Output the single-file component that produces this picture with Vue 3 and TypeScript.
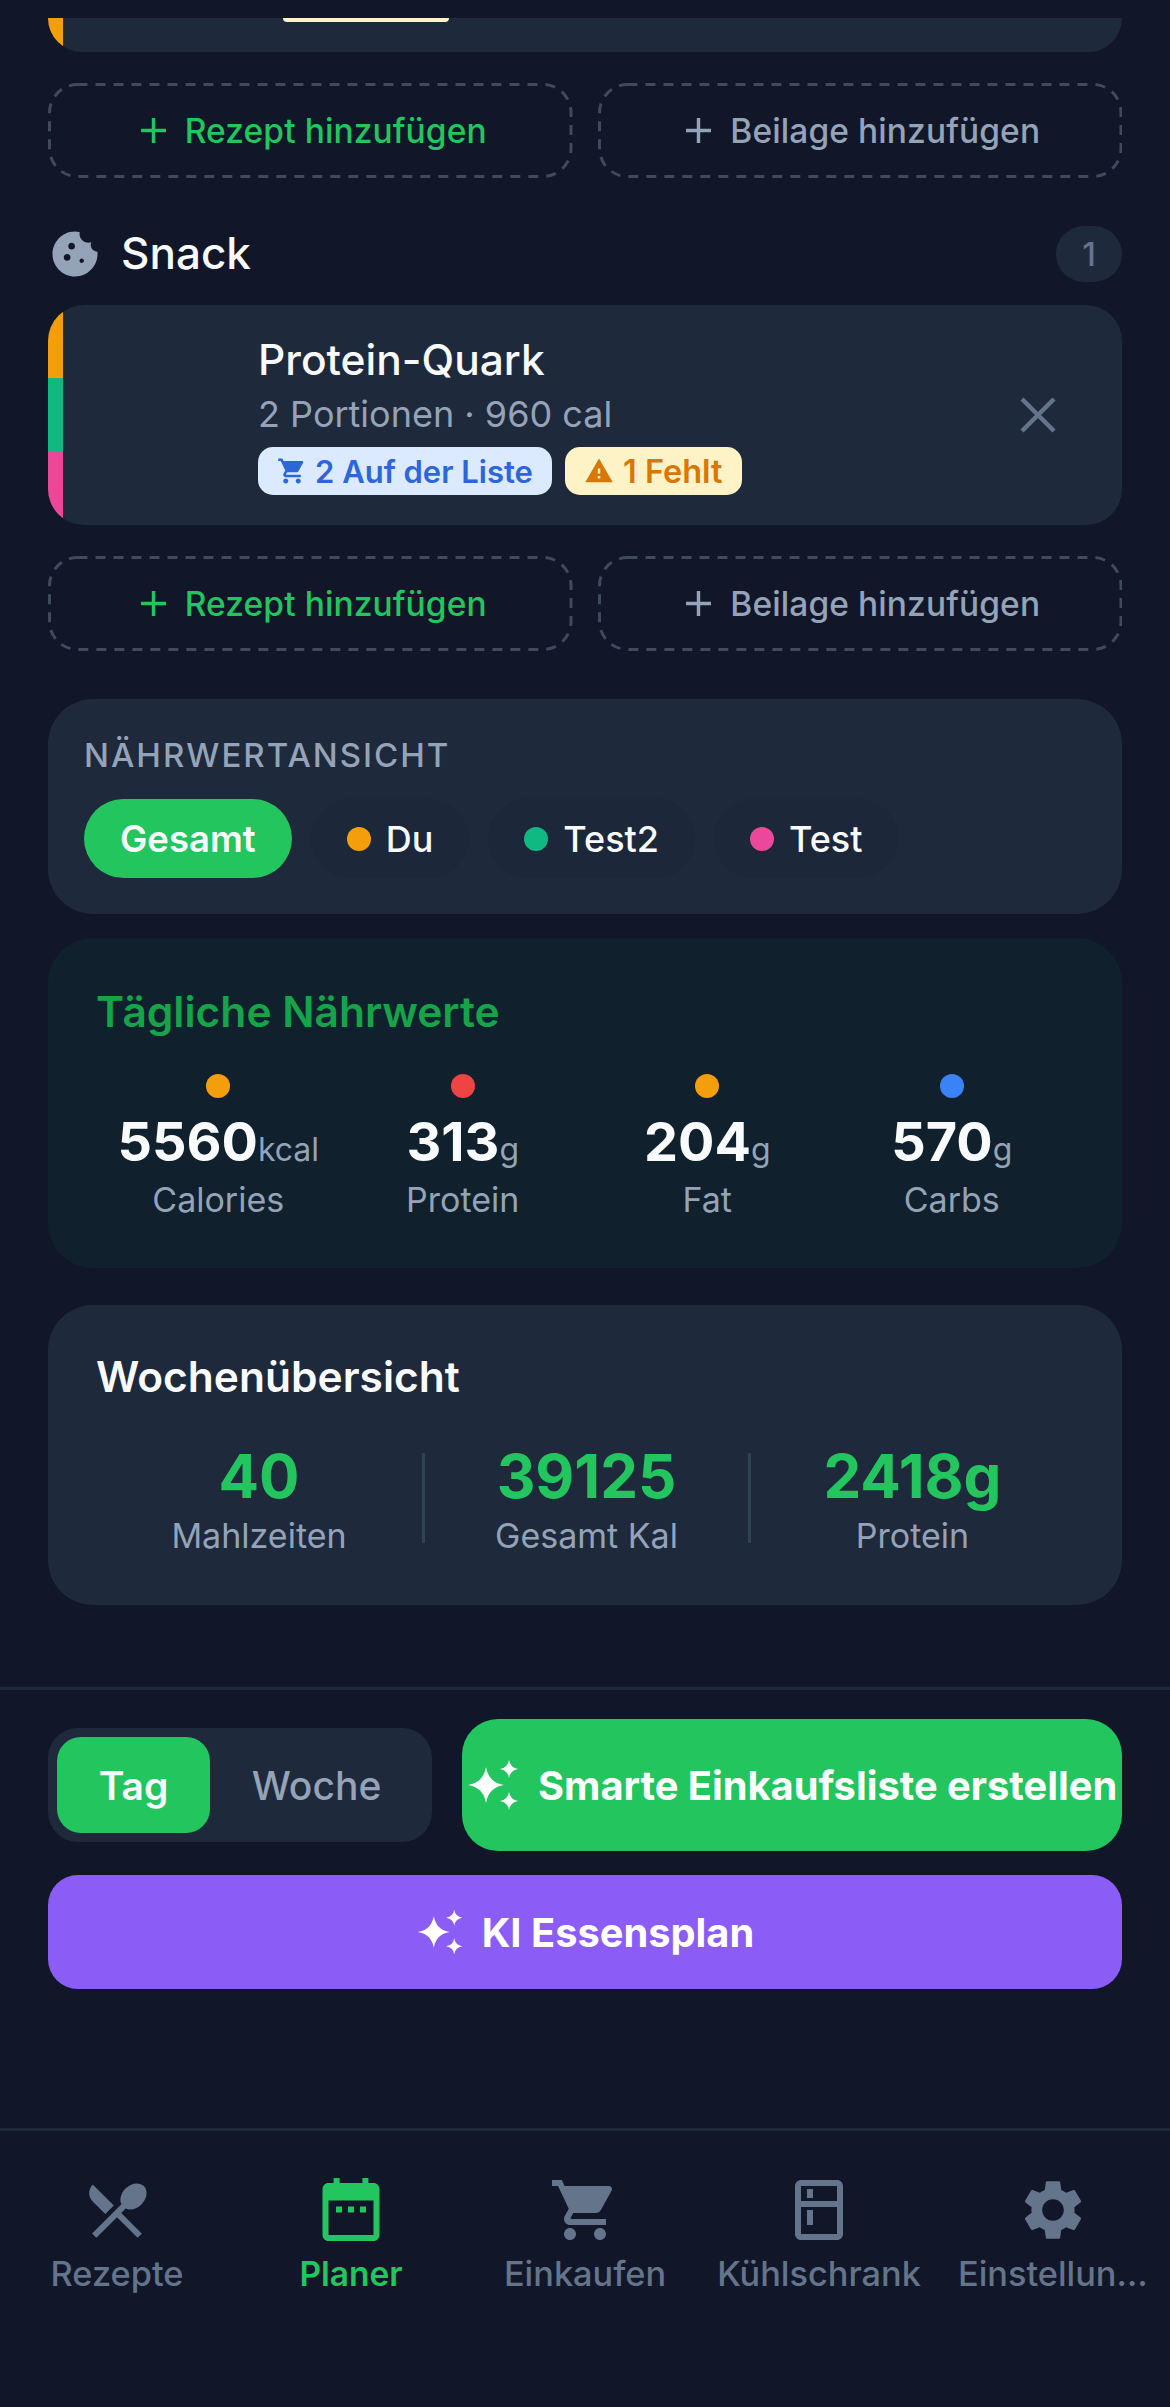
<script setup lang="ts">
type Chip = { name: string; color?: string; active?: boolean };
type Macro = { value: string; unit: string; label: string; color: string };
type WeekStat = { value: string; label: string };
type NavItem = { label: string; path: string; active?: boolean };

const addButtons = [
  { label: "Rezept hinzufügen", green: true },
  { label: "Beilage hinzufügen", green: false },
];

const chips: Chip[] = [
  { name: "Gesamt", active: true },
  { name: "Du", color: "#f59e0b" },
  { name: "Test2", color: "#10b981" },
  { name: "Test", color: "#ec4899" },
];

const macros: Macro[] = [
  { value: "5560", unit: "kcal", label: "Calories", color: "#f59e0b" },
  { value: "313", unit: "g", label: "Protein", color: "#ef4444" },
  { value: "204", unit: "g", label: "Fat", color: "#f59e0b" },
  { value: "570", unit: "g", label: "Carbs", color: "#3b82f6" },
];

const weekStats: WeekStat[] = [
  { value: "40", label: "Mahlzeiten" },
  { value: "39125", label: "Gesamt Kal" },
  { value: "2418g", label: "Protein" },
];

const cartPath =
  "M7 18c-1.1 0-1.99.9-1.99 2S5.9 22 7 22s2-.9 2-2-.9-2-2-2zM1 2v2h2l3.6 7.59-1.35 2.45c-.16.28-.25.61-.25.96 0 1.1.9 2 2 2h12v-2H7.42c-.14 0-.25-.11-.25-.25l.03-.12.9-1.63h7.45c.75 0 1.41-.41 1.75-1.03l3.58-6.49c.08-.14.12-.31.12-.48 0-.55-.45-1-1-1H5.21l-.94-2H1zm16 16c-1.1 0-1.99.9-1.99 2s.89 2 1.99 2 2-.9 2-2-.9-2-2-2z";

const navItems: NavItem[] = [
  {
    label: "Rezepte",
    path: "M8.1 13.34l2.83-2.83L3.91 3.5c-1.56 1.56-1.56 4.09 0 5.66l4.19 4.18zm6.78-1.81c1.53.71 3.68.21 5.27-1.38 1.91-1.91 2.28-4.65.81-6.12-1.46-1.46-4.2-1.1-6.12.81-1.59 1.59-2.09 3.74-1.38 5.27L3.7 19.87l1.41 1.41L12 14.41l6.88 6.88 1.41-1.41L13.41 13l1.47-1.47z",
  },
  {
    label: "Planer",
    active: true,
    path: "M6.2 1.3h2V3h7.6V1.3h2V3h1.7c1.1 0 2 .9 2 2v15.3c0 1.1-.9 2-2 2h-15c-1.1 0-2-.9-2-2V5c0-1.1.9-2 2-2h1.7V1.3zM4.5 8.8v11.5h15V8.8h-15zM7 10.8h2v2H7zm4 0h2v2h-2zm4 0h2v2h-2z",
  },
  { label: "Einkaufen", path: cartPath },
  {
    label: "Kühlschrank",
    path: "M18 2.01L6 2c-1.1 0-2 .89-2 2v16c0 1.1.9 2 2 2h12c1.1 0 2-.9 2-2V4c0-1.11-.9-1.99-2-1.99zM18 20H6v-9.02h12V20zm0-11H6V4h12v5zM8 5h2v3H8zm0 7h2v5H8z",
  },
  {
    label: "Einstellungen",
    path: "M19.14 12.94c.04-.3.06-.61.06-.94 0-.32-.02-.64-.07-.94l2.03-1.58c.18-.14.23-.41.12-.61l-1.92-3.32c-.12-.22-.37-.29-.59-.22l-2.39.96c-.5-.38-1.03-.7-1.62-.94l-.36-2.54c-.04-.24-.24-.41-.48-.41h-3.84c-.24 0-.43.17-.47.41l-.36 2.54c-.59.24-1.13.57-1.62.94l-2.39-.96c-.22-.08-.47 0-.59.22L2.74 8.87c-.12.21-.08.47.12.61l2.03 1.58c-.05.3-.09.63-.09.94s.02.64.07.94l-2.03 1.58c-.18.14-.23.41-.12.61l1.92 3.32c.12.22.37.29.59.22l2.39-.96c.5.38 1.03.7 1.62.94l.36 2.54c.05.24.24.41.48.41h3.84c.24 0 .44-.17.47-.41l.36-2.54c.59-.24 1.13-.56 1.62-.94l2.39.96c.22.08.47 0 .59-.22l1.92-3.32c.12-.22.07-.47-.12-.61l-2.01-1.58zM12 15.6c-1.98 0-3.6-1.62-3.6-3.6s1.62-3.6 3.6-3.6 3.6 1.62 3.6 3.6-1.62 3.6-3.6 3.6z",
  },
];

const star = (cx: number, cy: number, r: number): string => {
  const k = r * 0.14;
  return `M${cx} ${cy - r}Q${cx + k} ${cy - k} ${cx + r} ${cy}Q${cx + k} ${cy + k} ${cx} ${cy + r}Q${cx - k} ${cy + k} ${cx - r} ${cy}Q${cx - k} ${cy - k} ${cx} ${cy - r}Z`;
};
const sparklePath = star(20, 27, 18) + star(43, 11, 9) + star(43, 43, 9);
</script>

<template>
  <div class="screen">
    <div class="status"></div>

    <main class="content">
      <!-- Rest der vorherigen Karte, oben abgeschnitten -->
      <div class="card-tail">
        <span class="tail-strip"></span>
        <span class="tail-badge"></span>
      </div>

      <div class="add-row first">
        <button v-for="btn in addButtons" :key="btn.label" class="add-btn" :class="{ green: btn.green }">
          <svg class="dashes"><rect x="1.5" y="1.5" rx="28" ry="28" /></svg>
          <svg class="plus" viewBox="0 0 27 27"><path d="M13.5 1v25M1 13.5h25" /></svg>
          {{ btn.label }}
        </button>
      </div>

      <div class="section-head">
        <svg class="cookie" viewBox="0 0 24 24">
          <path
            d="M21.95 10.99c-1.79-.03-3.7-1.95-2.68-4.22-2.97 1-5.78-1.59-5.19-4.56C7.11.74 2 6.41 2 12c0 5.52 4.48 10 10 10 5.89 0 10.54-5.08 9.95-11.01zM8.5 15c-.83 0-1.5-.67-1.5-1.5S7.67 12 8.5 12s1.5.67 1.5 1.5S9.33 15 8.5 15zm2-5C9.67 10 9 9.33 9 8.5S9.67 7 10.5 7s1.5.67 1.5 1.5-.67 1.5-1.5 1.5zm4.5 6c-.55 0-1-.45-1-1s.45-1 1-1 1 .45 1 1-.45 1-1 1z"
          />
        </svg>
        <h2 class="section-title">Snack</h2>
        <span class="count">1</span>
      </div>

      <article class="meal">
        <div class="strips">
          <span class="orange"></span>
          <span class="teal"></span>
          <span class="pink"></span>
        </div>
        <div class="meal-body">
          <div class="meal-title">Protein-Quark</div>
          <div class="meal-sub">2 Portionen · 960 cal</div>
          <div class="tags">
            <span class="tag blue">
              <svg viewBox="0 0 24 24"><path :d="cartPath" /></svg>
              2 Auf der Liste
            </span>
            <span class="tag amber">
              <svg viewBox="0 0 24 24">
                <path d="M1 21h22L12 2 1 21zm12-3h-2v-2h2v2zm0-4h-2v-4h2v4z" />
              </svg>
              1 Fehlt
            </span>
          </div>
        </div>
        <svg class="close" viewBox="0 0 36 36"><path d="M2 2l32 32M34 2L2 34" /></svg>
      </article>

      <div class="add-row second">
        <button v-for="btn in addButtons" :key="btn.label" class="add-btn" :class="{ green: btn.green }">
          <svg class="dashes"><rect x="1.5" y="1.5" rx="28" ry="28" /></svg>
          <svg class="plus" viewBox="0 0 27 27"><path d="M13.5 1v25M1 13.5h25" /></svg>
          {{ btn.label }}
        </button>
      </div>

      <section class="view-card">
        <div class="view-label">NÄHRWERTANSICHT</div>
        <div class="chips">
          <button v-for="chip in chips" :key="chip.name" class="chip" :class="{ active: chip.active }">
            <span v-if="chip.color" class="chip-dot" :style="{ background: chip.color }"></span>
            {{ chip.name }}
          </button>
        </div>
      </section>

      <section class="daily-card">
        <h3 class="daily-title">Tägliche Nährwerte</h3>
        <div class="macros">
          <div v-for="macro in macros" :key="macro.label" class="macro">
            <span class="macro-dot" :style="{ background: macro.color }"></span>
            <div class="macro-value">
              {{ macro.value }}<span class="macro-unit">{{ macro.unit }}</span>
            </div>
            <div class="macro-label">{{ macro.label }}</div>
          </div>
        </div>
      </section>

      <section class="week-card">
        <h3 class="week-title">Wochenübersicht</h3>
        <div class="week-stats">
          <div v-for="stat in weekStats" :key="stat.label" class="week-stat">
            <div class="week-value">{{ stat.value }}</div>
            <div class="week-label">{{ stat.label }}</div>
          </div>
        </div>
      </section>
    </main>

    <div class="actions">
      <div class="actions-row">
        <div class="toggle">
          <button class="toggle-btn active">Tag</button>
          <button class="toggle-btn">Woche</button>
        </div>
        <button class="smart-btn">
          <svg class="sparkle" viewBox="0 0 54 54"><path :d="sparklePath" /></svg>
          Smarte Einkaufsliste erstellen
        </button>
      </div>
      <button class="ai-btn">
        <svg class="sparkle small" viewBox="0 0 54 54"><path :d="sparklePath" /></svg>
        KI Essensplan
      </button>
    </div>

    <nav class="tabbar">
      <div v-for="item in navItems" :key="item.label" class="tab" :class="{ active: item.active }">
        <svg class="tab-icon" viewBox="0 0 24 24"><path :d="item.path" /></svg>
        <span class="tab-label">{{ item.label }}</span>
      </div>
    </nav>
  </div>
</template>

<style>
html,
body {
  margin: 0;
  background: #111729;
}
</style>

<style scoped>
.screen {
  width: 1170px;
  height: 2407px;
  overflow: hidden;
  display: flex;
  flex-direction: column;
  background: #111729;
  color: #f8fafc;
  font-family: Inter, "Noto Sans", sans-serif;
}
button {
  font-family: inherit;
  border: 0;
  padding: 0;
  background: none;
  cursor: pointer;
}
.status {
  height: 18px;
  flex: none;
}
.content {
  height: 1669px;
  flex: none;
  padding: 0 48px;
  box-sizing: border-box;
}

.card-tail {
  position: relative;
  height: 34px;
  background: #1e293b;
  border-radius: 0 0 36px 36px;
  overflow: hidden;
}
.tail-strip {
  position: absolute;
  left: 0;
  top: 0;
  bottom: 0;
  width: 15px;
  background: #f59e0b;
}
.tail-badge {
  position: absolute;
  left: 235px;
  top: 0;
  width: 166px;
  height: 4px;
  background: #fef3c7;
  border-radius: 0 0 15px 15px;
}

.add-row {
  display: flex;
  gap: 25px;
  height: 95px;
}
.add-row.first {
  margin-top: 31px;
}
.add-row.second {
  margin-top: 31px;
}
.add-btn {
  position: relative;
  flex: 1;
  display: flex;
  align-items: center;
  justify-content: center;
  gap: 18px;
  padding-left: 6px;
  color: #94a3b8;
  font-size: 33.5px;
  font-weight: 500;
  letter-spacing: 0.1px;
}
.add-btn.green {
  color: #22c55e;
}
.dashes {
  position: absolute;
  inset: 0;
  width: 100%;
  height: 100%;
}
.dashes rect {
  width: calc(100% - 3px);
  height: calc(100% - 3px);
  fill: none;
  stroke: #3f4a5c;
  stroke-width: 3;
  stroke-dasharray: 10 8;
}
.plus {
  width: 27px;
  height: 27px;
  flex: none;
}
.plus path {
  fill: none;
  stroke: currentColor;
  stroke-width: 3.4;
}

.section-head {
  display: flex;
  align-items: center;
  height: 56px;
  margin-top: 48px;
}
.cookie {
  width: 54px;
  height: 54px;
  fill: #94a3b8;
  flex: none;
}
.section-title {
  margin: -2px 0 0 19px;
  font-size: 44px;
  font-weight: 500;
  flex: 1;
}
.count {
  width: 66px;
  height: 56px;
  border-radius: 28px;
  background: #1e293b;
  color: #64748b;
  font-size: 33px;
  font-weight: 500;
  display: flex;
  align-items: center;
  justify-content: center;
}

.meal {
  display: flex;
  align-items: center;
  height: 220px;
  margin-top: 23px;
  background: #1e293b;
  border-radius: 36px;
  overflow: hidden;
}
.strips {
  width: 15px;
  height: 100%;
  display: flex;
  flex-direction: column;
  flex: none;
}
.strips span {
  flex: 1;
}
.orange {
  background: #f59e0b;
}
.teal {
  background: #10b981;
}
.pink {
  background: #ec4899;
}
.meal-body {
  flex: 1;
  margin-left: 195px;
}
.meal-title {
  font-size: 42.5px;
  font-weight: 500;
  line-height: 50px;
}
.meal-sub {
  margin-top: 4px;
  font-size: 36px;
  line-height: 50px;
  color: #94a3b8;
}
.tags {
  display: flex;
  gap: 13px;
  margin-top: 8px;
}
.tag {
  display: flex;
  align-items: center;
  gap: 8px;
  height: 48px;
  padding: 0 19px;
  border-radius: 15px;
  font-size: 31px;
  font-weight: 600;
}
.tag svg {
  width: 30px;
  height: 30px;
  fill: currentColor;
}
.tag.blue {
  background: #dbeafe;
  color: #2d66d9;
}
.tag.amber {
  background: #fef3c7;
  color: #d97706;
  gap: 9px;
  font-size: 32.5px;
}
.close {
  width: 36px;
  height: 36px;
  margin-right: 66px;
  flex: none;
}
.close path {
  fill: none;
  stroke: #64748b;
  stroke-width: 4.5;
}

.view-card {
  height: 215px;
  margin-top: 48px;
  padding: 36px 36px 0;
  box-sizing: border-box;
  background: #1e293b;
  border-radius: 45px;
}
.view-label {
  font-size: 33px;
  line-height: 40px;
  font-weight: 500;
  letter-spacing: 2px;
  color: #94a3b8;
}
.chips {
  display: flex;
  gap: 19px;
  margin-top: 24px;
}
.chip {
  display: flex;
  align-items: center;
  gap: 15px;
  height: 79px;
  padding: 0 36px;
  border-radius: 40px;
  background: #1c2739;
  color: #f8fafc;
  font-size: 36px;
  font-weight: 500;
}
.chip.active {
  background: #22c55e;
  font-size: 36.5px;
  font-weight: 600;
}
.chip-dot {
  width: 24px;
  height: 24px;
  border-radius: 50%;
  flex: none;
}

.daily-card {
  height: 330px;
  margin-top: 24px;
  padding: 48px 48px 0;
  box-sizing: border-box;
  background: #10202c;
  border-radius: 45px;
}
.daily-title {
  margin: 0;
  font-size: 42.5px;
  line-height: 52px;
  font-weight: 600;
  color: #16a34a;
}
.macros {
  display: grid;
  grid-template-columns: repeat(4, 1fr);
  margin-top: 36px;
}
.macro {
  display: flex;
  flex-direction: column;
  align-items: center;
}
.macro-dot {
  width: 24px;
  height: 24px;
  border-radius: 50%;
}
.macro-value {
  margin-top: 11px;
  font-size: 54px;
  line-height: 66px;
  font-weight: 700;
}
.macro-unit {
  font-size: 32px;
  font-weight: 400;
  color: #94a3b8;
}
.macro-label {
  margin-top: -4px;
  font-size: 34px;
  line-height: 42px;
  color: #94a3b8;
}

.week-card {
  height: 300px;
  margin-top: 37px;
  padding: 48px 48px 0;
  box-sizing: border-box;
  background: #1e293b;
  border-radius: 45px;
}
.week-title {
  margin: 0;
  font-size: 42.5px;
  line-height: 48px;
  font-weight: 600;
}
.week-stats {
  display: grid;
  grid-template-columns: repeat(3, 1fr);
  margin-top: 52px;
}
.week-stat {
  text-align: center;
  border-left: 3px solid #334155;
  height: 90px;
}
.week-stat:first-child {
  border-left: 0;
}
.week-value {
  font-size: 60px;
  line-height: 72px;
  font-weight: 700;
  color: #22c55e;
  margin-top: -13px;
}
.week-label {
  font-size: 34px;
  line-height: 42px;
  color: #94a3b8;
  margin-top: 3px;
}

.actions {
  flex: none;
  height: 441px;
  box-sizing: border-box;
  border-top: 3px solid #1e293b;
  padding: 29px 48px 0;
}
.actions-row {
  display: flex;
  align-items: center;
  gap: 30px;
}
.toggle {
  display: flex;
  align-items: center;
  width: 384px;
  height: 114px;
  flex: none;
  padding: 0 9px;
  box-sizing: border-box;
  background: #1e293b;
  border-radius: 30px;
}
.toggle-btn {
  flex: 1;
  height: 96px;
  border-radius: 24px;
  color: #94a3b8;
  font-size: 39px;
  font-weight: 500;
}
.toggle-btn.active {
  flex: none;
  width: 153px;
  background: #22c55e;
  color: #f8fafc;
  font-weight: 600;
}
.smart-btn {
  flex: 1;
  height: 132px;
  display: flex;
  align-items: center;
  gap: 18px;
  padding-left: 4px;
  background: #22c55e;
  border-radius: 36px;
  color: #fff;
  font-size: 39.8px;
  font-weight: 700;
  white-space: nowrap;
}
.sparkle {
  width: 54px;
  height: 54px;
  fill: #fff;
  flex: none;
}
.sparkle.small {
  width: 48px;
  height: 48px;
}
.ai-btn {
  width: 100%;
  height: 114px;
  margin-top: 24px;
  display: flex;
  align-items: center;
  justify-content: center;
  gap: 18px;
  background: #8b5cf6;
  border-radius: 30px;
  color: #fff;
  font-size: 39.8px;
  font-weight: 700;
}

.tabbar {
  flex: 1;
  display: grid;
  grid-template-columns: repeat(5, 234px);
  border-top: 3px solid #1e293b;
  padding-top: 43px;
  box-sizing: border-box;
}
.tab {
  display: flex;
  flex-direction: column;
  align-items: center;
  color: #64748b;
  min-width: 0;
}
.tab.active {
  color: #22c55e;
}
.tab-icon {
  width: 72px;
  height: 72px;
  fill: currentColor;
  flex: none;
}
.tab-label {
  width: 100%;
  box-sizing: border-box;
  padding: 0 22px;
  margin-top: 7px;
  font-size: 34.3px;
  line-height: 42px;
  font-weight: 500;
  text-align: center;
  white-space: nowrap;
  overflow: hidden;
  text-overflow: ellipsis;
}
.tab:nth-child(4) .tab-label {
  padding: 0;
}
.tab.active .tab-label {
  font-size: 33.5px;
  font-weight: 600;
}
</style>
